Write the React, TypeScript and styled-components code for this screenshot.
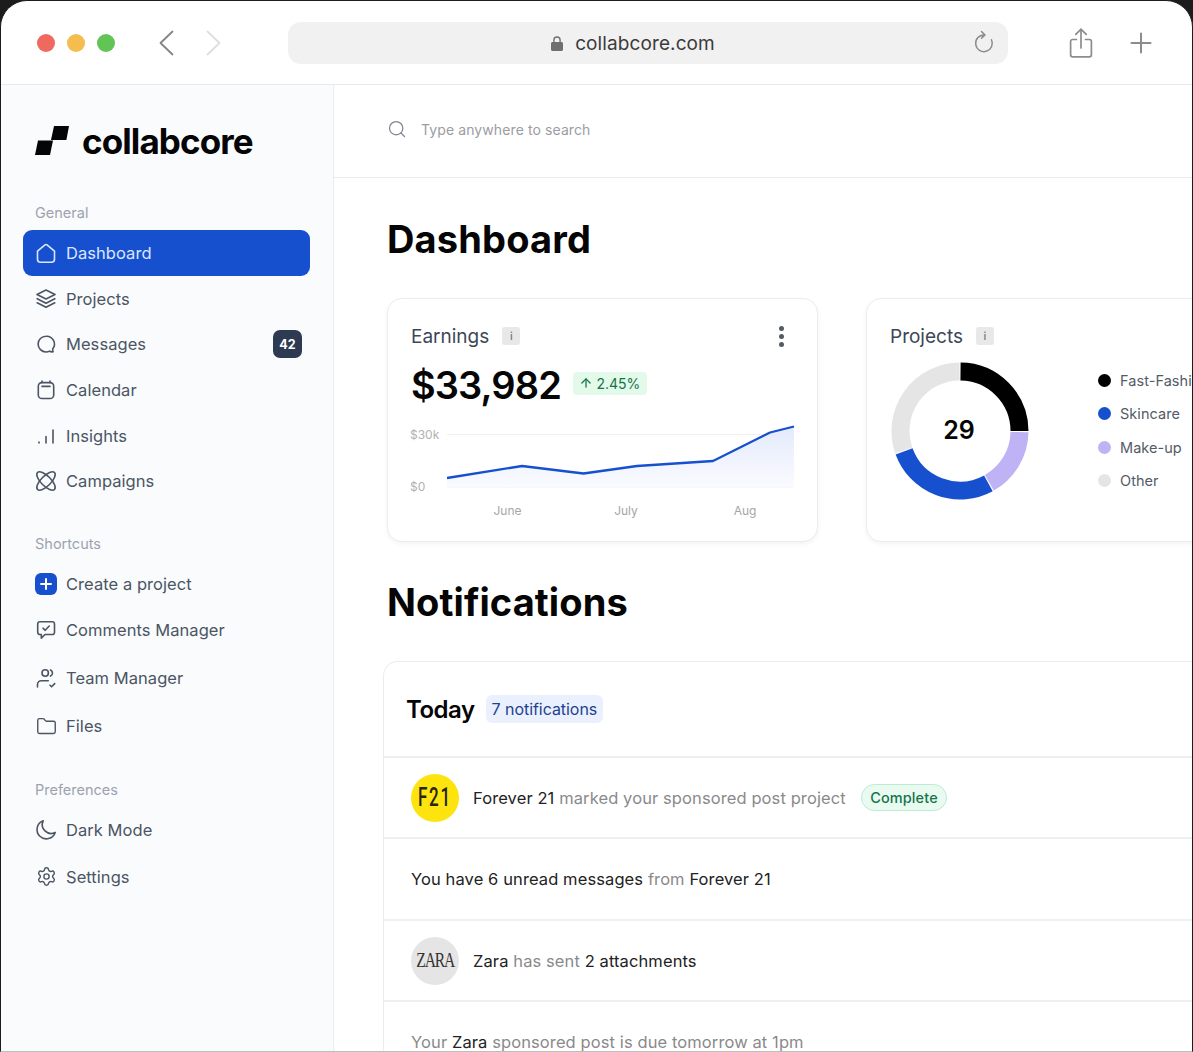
import React from "react";
import styled, { createGlobalStyle } from "styled-components";
import { ArrowUp, Folder, Search, Settings } from "lucide-react";

const GlobalStyle = createGlobalStyle`
  html, body {
    margin: 0;
    padding: 0;
    background: #1c1c1c;
    overflow: hidden;
  }
  * {
    box-sizing: border-box;
  }
`;

const BrowserWindow = styled.div`
  width: 1193px;
  height: 1052px;
  display: flex;
  flex-direction: column;
  overflow: hidden;
  background: #fff;
  border: 1px solid #1c1c1c;
  border-bottom-color: #bdbdbd;
  border-radius: 27px 27px 0 0;
  font-family: Inter, "Liberation Sans", sans-serif;
`;

const Toolbar = styled.header`
  flex: 0 0 84px;
  display: flex;
  align-items: center;
  padding: 1px 0 0 36px;
  border-bottom: 1px solid #e9e9e9;
`;

const Lights = styled.div`
  display: flex;
  gap: 12px;
`;

const Light = styled.span<{ $color: string }>`
  width: 18px;
  height: 18px;
  border-radius: 50%;
  background: ${(props) => props.$color};
`;

const NavArrows = styled.div`
  display: flex;
  gap: 32px;
  margin-left: 44px;
`;

const UrlBar = styled.div`
  position: relative;
  width: 720px;
  height: 42px;
  margin-left: 67px;
  display: flex;
  align-items: center;
  justify-content: center;
  gap: 12px;
  padding-right: 30px;
  background: #f1f1f1;
  border-radius: 13px;
  color: #3b3b3b;
  font-size: 19px;
  letter-spacing: 0.1px;
`;

const Reload = styled.svg`
  position: absolute;
  right: 12px;
  top: 8px;
`;

const ToolbarActions = styled.div`
  display: flex;
  align-items: center;
  gap: 37px;
  margin-left: 61px;
`;

const Body = styled.div`
  flex: 1;
  display: flex;
  min-height: 0;
`;

const Sidebar = styled.aside`
  flex: 0 0 333px;
  padding: 36px 23px 0 22px;
  background: #f9fbfd;
  border-right: 1px solid #e9ecf1;
`;

const Logo = styled.div`
  height: 40px;
  display: flex;
  align-items: center;
  gap: 13px;
  padding-left: 12px;
`;

const LogoText = styled.span`
  font-family: Inter, "Liberation Sans", sans-serif;
  font-size: 35px;
  font-weight: 700;
  letter-spacing: -0.9px;
  color: #050505;
`;

const SectionLabel = styled.div<{ $top: number; $bottom: number }>`
  height: 18px;
  line-height: 18px;
  margin: ${(props) => props.$top}px 0 ${(props) => props.$bottom}px;
  padding-left: 12px;
  font-size: 14.5px;
  color: #9ca3af;
`;

const NavItem = styled.div<{ $height?: number; $active?: boolean }>`
  height: ${(props) => props.$height ?? 45.6}px;
  display: flex;
  align-items: center;
  gap: 9px;
  padding: ${(props) => (props.$active ? 0 : 1)}px 8px 0 12px;
  border-radius: 9px;
  background: ${(props) => (props.$active ? "#1650cf" : "transparent")};
  color: ${(props) => (props.$active ? "#dbe7ff" : "#4b5563")};
  font-size: 16.5px;
  letter-spacing: 0.05px;
`;

const IconBox = styled.span`
  flex: 0 0 22px;
  height: 22px;
  display: flex;
  align-items: center;
  justify-content: center;
`;

const NavText = styled.span`
  flex: 1;
`;

const Badge = styled.span`
  width: 29px;
  height: 28px;
  display: flex;
  align-items: center;
  justify-content: center;
  border-radius: 7px;
  background: #2d3a52;
  color: #fff;
  font-size: 12.5px;
  font-weight: 700;
`;

const PlusTile = styled.span`
  width: 22px;
  height: 22px;
  display: flex;
  align-items: center;
  justify-content: center;
  border-radius: 6px;
  background: #1650cf;
`;

const Main = styled.main`
  flex: 1;
  min-width: 0;
  overflow: hidden;
`;

const SearchBar = styled.div`
  height: 93px;
  display: flex;
  align-items: center;
  gap: 14px;
  padding: 0 0 4px 53px;
  border-bottom: 1px solid #e9ebee;
  color: #9a9da3;
  font-size: 14px;
  letter-spacing: 0.1px;
`;

const Content = styled.div`
  padding-left: 53px;
`;

const PageTitle = styled.h1<{ $top: number; $bottom: number; $spacing: number }>`
  height: 46px;
  line-height: 46px;
  margin: ${(props) => props.$top}px 0 ${(props) => props.$bottom}px;
  font-size: 38px;
  font-weight: 700;
  letter-spacing: ${(props) => props.$spacing}px;
  color: #050505;
`;

const Cards = styled.div`
  display: flex;
  gap: 48px;
`;

const Card = styled.section`
  flex: 0 0 431px;
  height: 244px;
  padding: 23px 23px;
  background: #fff;
  border: 1px solid #ececec;
  border-radius: 15px;
  box-shadow: 0 2px 5px rgba(16, 24, 40, 0.05);
`;

const CardHeader = styled.div`
  display: flex;
  align-items: center;
  height: 28px;
  gap: 13px;
  color: #3d4657;
  font-size: 19px;
`;

const InfoTag = styled.span`
  width: 18px;
  height: 18px;
  display: flex;
  align-items: center;
  justify-content: center;
  border-radius: 3px;
  background: #e8e8e8;
  color: #777;
  font-size: 11px;
  font-weight: 500;
`;

const MoreDots = styled.span`
  margin-left: auto;
  margin-right: 10px;
  display: flex;
  flex-direction: column;
  gap: 3px;
`;

const Dot = styled.span`
  width: 5px;
  height: 5px;
  border-radius: 50%;
  background: #555b66;
`;

const AmountRow = styled.div`
  display: flex;
  align-items: center;
  gap: 12px;
  margin-top: 10px;
  height: 50px;
`;

const Amount = styled.span`
  font-size: 38px;
  font-weight: 600;
  letter-spacing: -0.9px;
  color: #050505;
`;

const Trend = styled.span`
  height: 23px;
  display: flex;
  align-items: center;
  gap: 3px;
  padding: 0 6.5px;
  margin-bottom: 4px;
  border-radius: 4px;
  background: #e3f9ea;
  color: #17734a;
  font-size: 14px;
`;

const Chart = styled.svg`
  display: block;
  margin: 8px 0 0 -1px;
  font-family: Inter, "Liberation Sans", sans-serif;
`;

const ProjectsBody = styled.div`
  display: flex;
  align-items: flex-start;
  gap: 69px;
  margin: 12px 0 0 1px;
`;

const Legend = styled.ul`
  list-style: none;
  margin: 0;
  padding: 8px 0 0;
  display: flex;
  flex-direction: column;
  gap: 13.5px;
  white-space: nowrap;
`;

const LegendItem = styled.li`
  height: 20px;
  display: flex;
  align-items: center;
  gap: 9px;
  color: #555b66;
  font-size: 14.5px;
  letter-spacing: 0.05px;
`;

const LegendDot = styled.span<{ $color: string }>`
  width: 13px;
  height: 13px;
  border-radius: 50%;
  background: ${(props) => props.$color};
`;

const NotificationPanel = styled.section`
  width: 900px;
  margin-left: -4px;
  background: #fff;
  border: 1px solid #ececec;
  border-bottom: 0;
  border-radius: 15px 15px 0 0;
`;

const PanelHeader = styled.div`
  height: 94px;
  display: flex;
  align-items: center;
  gap: 11px;
  padding-left: 22px;
`;

const PanelTitle = styled.h2`
  margin: 0;
  font-size: 24px;
  font-weight: 600;
  letter-spacing: -0.5px;
  color: #050505;
`;

const CountTag = styled.span`
  height: 28px;
  display: flex;
  align-items: center;
  padding: 0 6px;
  border-radius: 6px;
  background: #eaf0fd;
  color: #1d428f;
  font-size: 16px;
  letter-spacing: -0.05px;
`;

const NotificationRow = styled.div<{ $height: number }>`
  height: ${(props) => props.$height}px;
  display: flex;
  align-items: center;
  gap: 14px;
  padding-left: 27px;
  border-top: 2px solid #eeeff1;
  color: #8a8a8a;
  font-size: 16.5px;
  letter-spacing: 0.1px;
`;

const LastRow = styled(NotificationRow)`
  align-items: flex-start;
  padding-top: 30px;
`;

const Strong = styled.span`
  color: #222;
`;

const Avatar = styled.span<{ $color: string }>`
  flex: 0 0 48px;
  height: 48px;
  display: flex;
  align-items: center;
  justify-content: center;
  overflow: hidden;
  border-radius: 50%;
  background: ${(props) => props.$color};
`;

const F21Mark = styled.span`
  font-family: Roboto, "Liberation Sans", sans-serif;
  font-size: 25px;
  font-weight: 500;
  letter-spacing: 2.5px;
  color: #2a2410;
  transform: scaleX(0.68);
`;

const ZaraMark = styled.span`
  font-family: "Liberation Serif", serif;
  font-size: 20px;
  letter-spacing: -1.5px;
  color: #333;
  transform: scaleX(0.78);
`;

const StatusPill = styled.span`
  height: 27px;
  display: flex;
  align-items: center;
  margin-left: 1px;
  padding: 0 8.5px;
  border: 1px solid #b9ecd0;
  border-radius: 14px;
  background: #e9fbf1;
  color: #17734a;
  font-size: 14.5px;
  font-weight: 500;
`;

const stroke = {
  fill: "none",
  stroke: "currentColor",
  strokeWidth: 1.6,
  strokeLinecap: "round" as const,
  strokeLinejoin: "round" as const,
};

const HomeIcon = () => (
  <svg width="22" height="22" viewBox="0 0 22 22" {...stroke}>
    <path d="M2.5 9.2 10 2.9a1.6 1.6 0 0 1 2 0l7.5 6.3v8a3 3 0 0 1-3 3h-11a3 3 0 0 1-3-3Z" />
  </svg>
);

const LayersIcon = () => (
  <svg width="22" height="22" viewBox="0 0 22 22" {...stroke}>
    <path d="M11 2 20 6.500 11 11 2 6.500Z" />
    <path d="M2.200 10.700 11 15.200l8.800-4.500M2.200 14.800 11 19.300l8.800-4.500" />
  </svg>
);

const MessageIcon = () => (
  <svg width="22" height="22" viewBox="0 0 22 22" {...stroke}>
    <path d="M11 3.2a7.9 7.9 0 1 0 0 15.8c1.3 0 2.6-.3 3.7-.9.6.5 2 .9 3.4.6-.4-.8-.6-1.8-.4-2.7a7.9 7.9 0 0 0-6.7-12.8Z" />
  </svg>
);

const CalendarIcon = () => (
  <svg width="22" height="22" viewBox="0 0 22 22" {...stroke}>
    <rect x="3.3" y="3.6" width="15.4" height="15.9" rx="3.6" />
    <path d="M7 7.4h8M7 2v1.6M15 2v1.6" />
  </svg>
);

const InsightsIcon = () => (
  <svg width="22" height="22" viewBox="0 0 22 22" {...stroke}>
    <path d="M4 17v1M11 11.5V18M18 5v13" />
  </svg>
);

const CampaignIcon = () => (
  <svg width="22" height="22" viewBox="0 0 22 22" {...stroke}>
    <ellipse cx="11" cy="11" rx="12" ry="4.9" transform="rotate(45 11 11)" />
    <ellipse cx="11" cy="11" rx="12" ry="4.9" transform="rotate(-45 11 11)" />
  </svg>
);

const CommentIcon = () => (
  <svg width="22" height="22" viewBox="0 0 22 22" {...stroke}>
    <path d="M5 2.8h12.2A2.3 2.3 0 0 1 19.5 5v8.2a2.3 2.3 0 0 1-2.3 2.3H10l-3.7 3.6v-3.6H5a2.3 2.3 0 0 1-2.3-2.3V5A2.3 2.3 0 0 1 5 2.8Z" />
    <path d="m8 9.2 2.2 2.1L14.2 7" />
  </svg>
);

const TeamIcon = () => (
  <svg width="22" height="22" viewBox="0 0 22 22" {...stroke}>
    <circle cx="10.2" cy="6" r="3.2" />
    <path d="M15.5 2.9a3.4 3.4 0 0 1 0 6.2M2.5 20v-2.5a3.8 3.8 0 0 1 3.8-3.8h7M15 18.2l1.6 1.6 3.1-3.2" />
  </svg>
);

const MoonIcon = () => (
  <svg width="22" height="22" viewBox="0 0 22 22" {...stroke}>
    <path d="M8.2 1.8a9.3 9.3 0 1 0 12 11.6 8.8 8.8 0 0 1-12-11.6Z" />
  </svg>
);

const LogoMark = () => (
  <svg width="34" height="30" viewBox="0 0 34 30" fill="#050505">
    <path d="M3 14.5h15L15 29H0Z" />
    <path d="M19 0h15l-2.6 14H16Z" />
  </svg>
);

const LockIcon = () => (
  <svg width="12" height="17" viewBox="0 0 14 18" fill="#6f6f6f">
    <path d="M1.8 7.2h10.4c1 0 1.8.8 1.8 1.8v7c0 1-.8 1.8-1.8 1.8H1.8C.8 17.8 0 17 0 16V9c0-1 .8-1.8 1.8-1.8Z" />
    <path d="M3.4 8V5a3.6 3.6 0 0 1 7.2 0v3" fill="none" stroke="#6f6f6f" strokeWidth="1.6" />
  </svg>
);

const ShareIcon = () => (
  <svg width="24" height="30" viewBox="0 0 24 30" fill="none" stroke="#8c8c8c" strokeWidth="1.7" strokeLinecap="round">
    <path d="M7.5 11.5H3.6a2 2 0 0 0-2 2v13.3a2 2 0 0 0 2 2h16.8a2 2 0 0 0 2-2V13.5a2 2 0 0 0-2-2h-3.9" />
    <path d="M12 20V1.5M6.8 6.4 12 1.2l5.2 5.2" />
  </svg>
);

const PlusIcon = () => (
  <svg width="22" height="22" viewBox="0 0 22 22" fill="none" stroke="#8c8c8c" strokeWidth="2" strokeLinecap="round">
    <path d="M11 1.5v19M1.5 11h19" />
  </svg>
);

const Chevron = ({ back, color }: { back?: boolean; color: string }) => (
  <svg width="15" height="26" viewBox="0 0 15 26" fill="none" stroke={color} strokeWidth="1.8" strokeLinecap="round" strokeLinejoin="round">
    <path d={back ? "M13.5 1.5 1.5 13l12 11.5" : "M1.5 1.5 13.5 13l-12 11.5"} />
  </svg>
);

const MiniPlus = () => (
  <svg width="12" height="12" viewBox="0 0 12 12" fill="none" stroke="#fff" strokeWidth="2" strokeLinecap="round">
    <path d="M6 1v10M1 6h10" />
  </svg>
);

const chartLine =
  "M37 48 L112 36 L173.500 43.500 L227 36 L303 31 L360 2.500 L384 -3.500";

const EarningsChart = () => (
  <Chart width="384" height="104" viewBox="0 -12 384 104" overflow="visible">
    <defs>
      <linearGradient id="earningsFill" x1="0" y1="0" x2="0" y2="1">
        <stop offset="0" stopColor="#e3eafb" />
        <stop offset="1" stopColor="#fafbff" />
      </linearGradient>
    </defs>
    <path d="M37 4.500H384M37 57H384" stroke="#efefef" strokeWidth="1" />
    <path d={`${chartLine} L384 57 L37 57 Z`} fill="url(#earningsFill)" />
    <path d={chartLine} fill="none" stroke="#1650cf" strokeWidth="2.3" strokeLinejoin="round" />
    <g fill="#b1b1b1" fontSize="12">
      <text x="0" y="9">$30k</text>
      <text x="0" y="61">$0</text>
    </g>
    <g fill="#a6a6a6" fontSize="12" textAnchor="middle">
      <text x="97.500" y="85">June</text>
      <text x="216" y="85">July</text>
      <text x="335" y="85">Aug</text>
    </g>
  </Chart>
);

const polar = (r: number, deg: number) => {
  const a = ((deg - 90) * Math.PI) / 180;
  return `${69 + r * Math.cos(a)} ${69 + r * Math.sin(a)}`;
};

const arc = (from: number, to: number) =>
  `M${polar(59.500, from)} A59.500 59.500 0 ${to - from > 180 ? 1 : 0} 1 ${polar(59.500, to)}`;

const donutSegments = [
  { from: 0.5, to: 90, color: "#000" },
  { from: 91, to: 150.5, color: "#c0b3f5" },
  { from: 151.5, to: 250, color: "#1650cf" },
  { from: 251, to: 359.5, color: "#e5e5e5" },
];

const ProjectsDonut = () => (
  <svg width="138" height="138" viewBox="0 0 138 138">
    {donutSegments.map((segment) => (
      <path key={segment.color} d={arc(segment.from, segment.to)} fill="none" stroke={segment.color} strokeWidth="18" />
    ))}
    <text x="68" y="77" textAnchor="middle" fontSize="25" fontWeight="600" fill="#050505" fontFamily="Inter, sans-serif">
      29
    </text>
  </svg>
);

const legend = [
  { label: "Fast-Fashion", color: "#000" },
  { label: "Skincare", color: "#1650cf" },
  { label: "Make-up", color: "#c0b3f5" },
  { label: "Other", color: "#e5e5e5" },
];

export default function App() {
  return (
    <BrowserWindow>
      <GlobalStyle />
      <Toolbar>
        <Lights>
          <Light $color="#ee6a5f" />
          <Light $color="#f5bd4f" />
          <Light $color="#61c454" />
        </Lights>
        <NavArrows>
          <Chevron back color="#858585" />
          <Chevron color="#dedede" />
        </NavArrows>
        <UrlBar>
          <LockIcon />
          collabcore.com
          <Reload width="24" height="24" viewBox="0 0 24 24" fill="none" stroke="#8c8c8c" strokeWidth="1.5" strokeLinecap="round" strokeLinejoin="round">
            <path d="M12 5a8.300 8.300 0 1 0 7.500 4.800M9.500 1.500 13 5l-3.500 3.300" />
          </Reload>
        </UrlBar>
        <ToolbarActions>
          <ShareIcon />
          <PlusIcon />
        </ToolbarActions>
      </Toolbar>
      <Body>
        <Sidebar>
          <Logo>
            <LogoMark />
            <LogoText>collabcore</LogoText>
          </Logo>
          <SectionLabel $top={43} $bottom={8}>General</SectionLabel>
          <NavItem $active>
            <IconBox><HomeIcon /></IconBox>
            <NavText>Dashboard</NavText>
          </NavItem>
          <NavItem>
            <IconBox><LayersIcon /></IconBox>
            <NavText>Projects</NavText>
          </NavItem>
          <NavItem>
            <IconBox><MessageIcon /></IconBox>
            <NavText>Messages</NavText>
            <Badge>42</Badge>
          </NavItem>
          <NavItem>
            <IconBox><CalendarIcon /></IconBox>
            <NavText>Calendar</NavText>
          </NavItem>
          <NavItem>
            <IconBox><InsightsIcon /></IconBox>
            <NavText>Insights</NavText>
          </NavItem>
          <NavItem>
            <IconBox><CampaignIcon /></IconBox>
            <NavText>Campaigns</NavText>
          </NavItem>
          <SectionLabel $top={31} $bottom={8}>Shortcuts</SectionLabel>
          <NavItem $height={46}>
            <IconBox><PlusTile><MiniPlus /></PlusTile></IconBox>
            <NavText>Create a project</NavText>
          </NavItem>
          <NavItem $height={46}>
            <IconBox><CommentIcon /></IconBox>
            <NavText>Comments Manager</NavText>
          </NavItem>
          <NavItem $height={50}>
            <IconBox><TeamIcon /></IconBox>
            <NavText>Team Manager</NavText>
          </NavItem>
          <NavItem $height={46}>
            <IconBox><Folder size={21} strokeWidth={1.6} /></IconBox>
            <NavText>Files</NavText>
          </NavItem>
          <SectionLabel $top={32} $bottom={8}>Preferences</SectionLabel>
          <NavItem $height={46}>
            <IconBox><MoonIcon /></IconBox>
            <NavText>Dark Mode</NavText>
          </NavItem>
          <NavItem $height={47}>
            <IconBox><Settings size={21} strokeWidth={1.6} /></IconBox>
            <NavText>Settings</NavText>
          </NavItem>
        </Sidebar>
        <Main>
          <SearchBar>
            <Search size={20} strokeWidth={1.5} color="#7d8490" />
            Type anywhere to search
          </SearchBar>
          <Content>
            <PageTitle $top={38} $bottom={36} $spacing={0.15}>Dashboard</PageTitle>
            <Cards>
              <Card>
                <CardHeader>
                  Earnings
                  <InfoTag>i</InfoTag>
                  <MoreDots>
                    <Dot />
                    <Dot />
                    <Dot />
                  </MoreDots>
                </CardHeader>
                <AmountRow>
                  <Amount>$33,982</Amount>
                  <Trend>
                    <ArrowUp size={14} strokeWidth={2.2} />
                    2.45%
                  </Trend>
                </AmountRow>
                <EarningsChart />
              </Card>
              <Card>
                <CardHeader>
                  Projects
                  <InfoTag>i</InfoTag>
                </CardHeader>
                <ProjectsBody>
                  <ProjectsDonut />
                  <Legend>
                    {legend.map((item) => (
                      <LegendItem key={item.label}>
                        <LegendDot $color={item.color} />
                        {item.label}
                      </LegendItem>
                    ))}
                  </Legend>
                </ProjectsBody>
              </Card>
            </Cards>
            <PageTitle $top={37} $bottom={36} $spacing={0.1}>Notifications</PageTitle>
            <NotificationPanel>
              <PanelHeader>
                <PanelTitle>Today</PanelTitle>
                <CountTag>7 notifications</CountTag>
              </PanelHeader>
              <NotificationRow $height={81}>
                <Avatar $color="#fde40f"><F21Mark>F21</F21Mark></Avatar>
                <span><Strong>Forever 21</Strong> marked your sponsored post project</span>
                <StatusPill>Complete</StatusPill>
              </NotificationRow>
              <NotificationRow $height={82}>
                <span><Strong>You have 6 unread messages</Strong> from <Strong>Forever 21</Strong></span>
              </NotificationRow>
              <NotificationRow $height={81}>
                <Avatar $color="#e5e5e5"><ZaraMark>ZARA</ZaraMark></Avatar>
                <span><Strong>Zara</Strong> has sent <Strong>2 attachments</Strong></span>
              </NotificationRow>
              <LastRow $height={70}>
                <span>Your <Strong>Zara</Strong> sponsored post is due tomorrow at 1pm</span>
              </LastRow>
            </NotificationPanel>
          </Content>
        </Main>
      </Body>
    </BrowserWindow>
  );
}
